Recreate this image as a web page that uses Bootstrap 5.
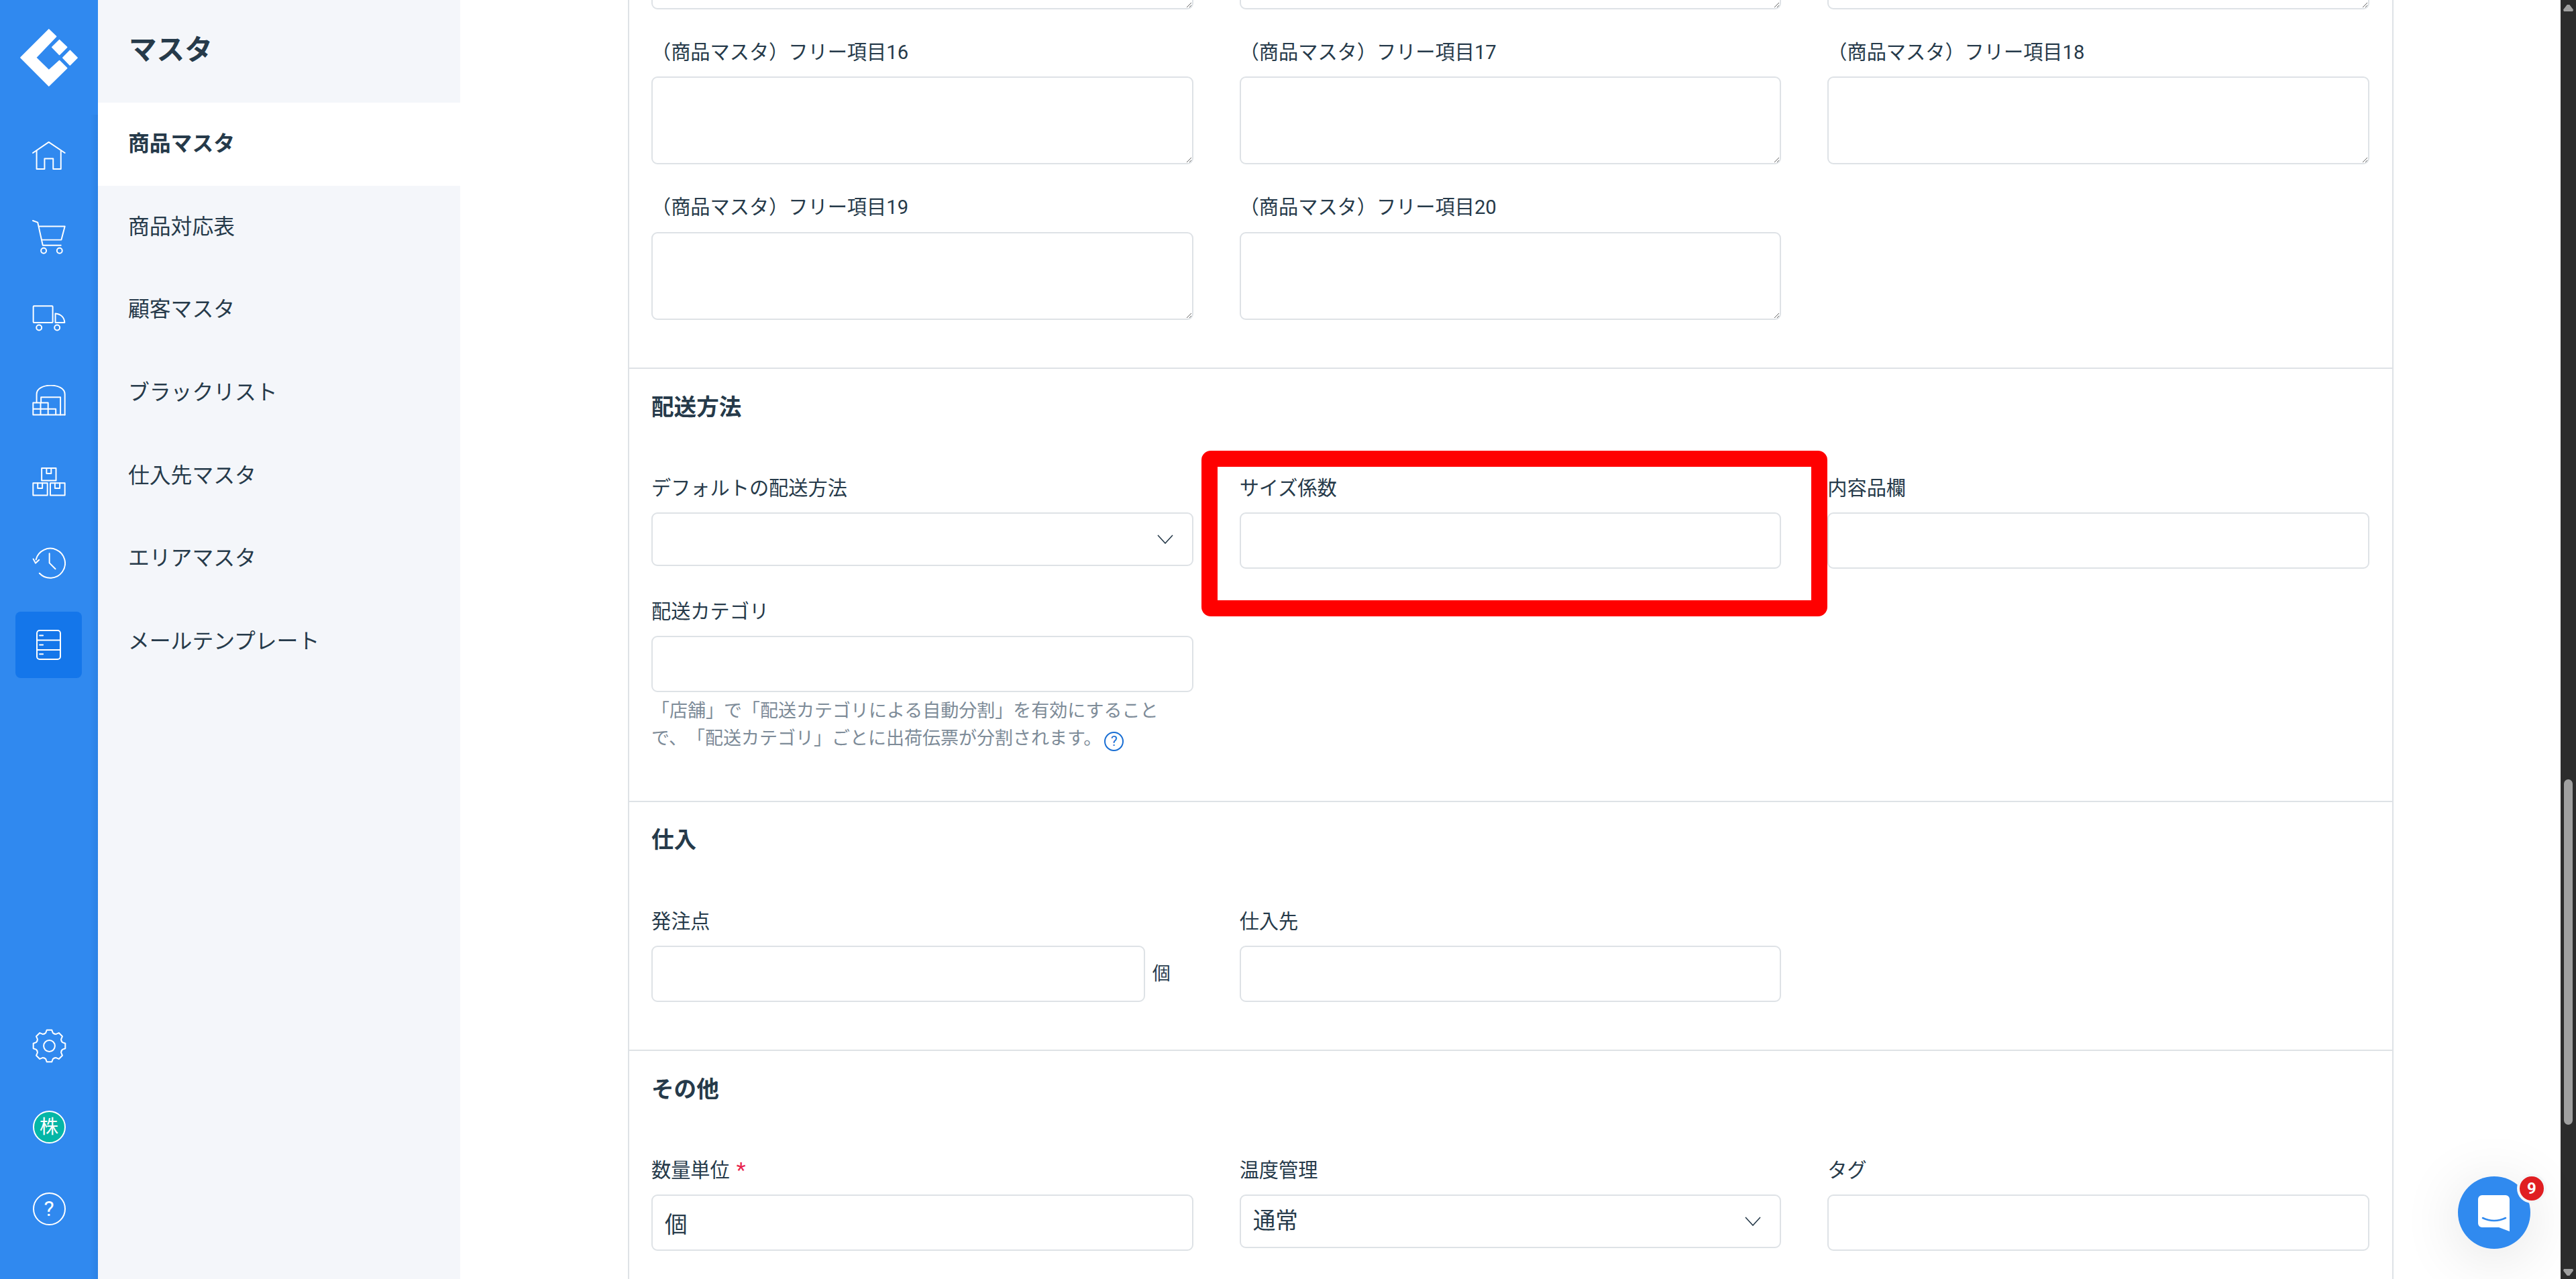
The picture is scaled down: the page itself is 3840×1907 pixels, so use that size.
<!DOCTYPE html>
<html lang="ja">

<head>
    <meta charset="UTF-8">
    <meta name="viewport" content="width=device-width, initial-scale=1.0">
    <title>商品マスタ</title>
    <link href="https://cdn.jsdelivr.net/npm/bootstrap@5.3.0/dist/css/bootstrap.min.css" rel="stylesheet">
    <style>
        html, body {
            height: 100%;
            overflow: hidden;
        }

        body {
            font-family: Roboto, "Noto Sans CJK JP", sans-serif;
            font-size: 29.2px;
            color: #263a4a;
            background: #fff;
            text-spacing-trim: space-all;
        }

        /* icon rail */
        .rail {
            width: 146px;
            background: linear-gradient(90deg, #3089ef 92%, #2c82e4 100%);
        }

        .rail-logo {
            height: 171px;
            background: #3089ef;
        }

        .rail-logo svg {
            width: 86px;
            height: 86px;
        }

        .rail-item {
            height: 121.6px;
        }

        .rail-item svg {
            fill: none;
            stroke: #fff;
            stroke-width: 6;
            stroke-linejoin: round;
            stroke-linecap: round;
        }

        .rail-item.active {
            height: 99px;
            width: 99px;
            margin: 11px 0 11.6px 23px;
            background: #1476ea;
            border-radius: 8px;
        }

        .rail-foot {
            padding-bottom: 44px;
        }

        .rail-round {
            width: 49px;
            height: 49px;
            border: 2px solid #fff;
            color: #fff;
            font-size: 32px;
            line-height: 1;
        }

        .rail-round.company {
            background: #05b6a6;
            font-size: 28px;
        }

        /* master menu */
        .panel {
            width: 540px;
            background: #f4f6fa;
        }

        .panel-title {
            height: 153px;
            padding: 0 0 4px 46px;
            margin: 0;
            font-size: 41.6px;
            font-weight: 700;
        }

        .panel .nav-link {
            height: 123.7px;
            padding: 0 0 0 45px;
            font-size: 31.8px;
            color: #263a4a;
        }

        .panel .nav-link.active {
            background: #fff;
            font-weight: 700;
        }

        /* form area */
        .main {
            min-width: 0;
            padding: 0 249px 0 250px;
        }

        .form-card {
            margin-top: -176px;
            border: 2px solid #dee2e6;
            border-width: 0 2px;
        }

        .form-section {
            padding: 32.5px 34px 30.5px 33px;
            border-top: 2px solid #dee2e6;
        }

        .form-section:first-child {
            padding-top: 0;
            border-top: 0;
        }

        .form-section h2 {
            margin: 0 0 72px;
            font-size: 33.6px;
            line-height: 1.5;
            font-weight: 700;
        }

        .form-section .row {
            --bs-gutter-x: 69px;
        }

        .field {
            margin-bottom: 41px;
        }

        .field label {
            display: block;
            padding-top: 2px;
            margin-bottom: 13.4px;
            line-height: 1.5;
        }

        .required {
            margin-left: 10px;
            font-size: 32px;
            line-height: 1;
            color: #e8254f;
        }

        .form-control,
        .form-select {
            height: 84px;
            padding: 0 18px;
            font-size: 33.6px;
            color: #263a4a;
            border: 2px solid #dee2e6;
            border-radius: 9px;
        }

        .form-select {
            height: 80px;
            background-image: url("data:image/svg+xml,%3Csvg xmlns='http://www.w3.org/2000/svg' viewBox='0 0 24 14'%3E%3Cpath d='M1 1l11 12L23 1' fill='none' stroke='%23263a4a' stroke-width='1.6'/%3E%3C/svg%3E");
            background-position: right 28px center;
            background-size: 24px 14px;
        }

        textarea.form-control {
            height: 131px;
            min-height: 0;
        }

        .unit {
            margin: 0 34px 0 11px;
            font-size: 27px;
        }

        .hint {
            margin-top: 8px;
            font-size: 27px;
            line-height: 41px;
            color: #7d8b98;
        }

        .hint-icon {
            width: 29px;
            height: 29px;
            margin-left: 4px;
            border: 2px solid #1a6fd4;
            color: #1a6fd4;
            font-size: 21px;
            line-height: 1;
            vertical-align: -2px;
        }

        .highlight {
            top: -33px;
            left: -57px;
            width: 933px;
            height: 247px;
            border: 24px solid #f00;
            border-radius: 14px;
            pointer-events: none;
        }

        /* browser scrollbar */
        .scrollbar {
            width: 23px;
            background: #2c2c2c;
        }

        .scrollbar-thumb {
            width: 13px;
            height: 515px;
            margin: 1162px auto 0;
            background: #a0a0a0;
            border-radius: 7px;
        }

        .scrollbar-arrow {
            right: 4px;
            width: 15px;
            height: 10px;
            background: #a0a0a0;
        }

        .scrollbar-arrow.up {
            top: 7px;
            clip-path: polygon(38% 0, 62% 0, 100% 75%, 94% 100%, 6% 100%, 0 75%);
        }

        .scrollbar-arrow.down {
            bottom: 5px;
            clip-path: polygon(6% 0, 94% 0, 100% 25%, 62% 100%, 38% 100%, 0 25%);
        }

        /* chat launcher */
        .chat {
            right: 68px;
            top: 1754px;
            width: 108px;
            height: 108px;
            background: #308aef;
            box-shadow: 0 12px 90px rgba(0, 0, 0, .12);
        }

        .chat svg {
            width: 48px;
            height: 54px;
            margin-top: 1px;
        }

        .chat-badge {
            top: -4px;
            right: -24px;
            width: 44px;
            height: 44px;
            border: 4px solid #f4f6f8;
            background: #e01e22;
            color: #fff;
            font-size: 24px;
            font-weight: 700;
            line-height: 1;
        }
    </style>
</head>

<body>
    <div class="d-flex h-100">
        <!-- Icon rail -->
        <aside class="rail d-flex flex-column flex-shrink-0">
            <div class="rail-logo d-flex align-items-center justify-content-center">
                <svg viewBox="87 128 257 257" fill="#fff" stroke="#fff" stroke-width="5" stroke-linejoin="round">
                    <path d="M215 131L247 162 157 256 215 313 262 270 295 303 215 382 90 256Z" />
                    <path d="M262 178L295 210 262 243 230 210Z" />
                    <path d="M309 225L341 257 309 289 278 257Z" />
                </svg>
            </div>
            <div class="rail-item d-flex align-items-center justify-content-center">
                <svg width="50" height="44" viewBox="140 628 152 132">
                    <path d="M143 682L215 633 288 682" />
                    <path d="M160 672V755H196V708H235V755H270V672" />
                </svg>
            </div>
            <div class="rail-item d-flex align-items-center justify-content-center">
                <svg width="50" height="51" viewBox="140 984 152 153">
                    <path d="M143 986L165 994 188 1098H270" />
                    <path d="M170 1012H288L272 1073H184" />
                    <circle cx="192" cy="1122" r="12" />
                    <circle cx="264" cy="1122" r="12" />
                </svg>
            </div>
            <div class="rail-item d-flex align-items-center justify-content-center">
                <svg width="50" height="39" viewBox="140 1365 152 117">
                    <rect x="145" y="1368" width="88" height="75" rx="3" />
                    <path d="M245 1402C270 1404 286 1420 287 1443H245Z" />
                    <circle cx="171" cy="1466" r="12" />
                    <circle cx="253" cy="1466" r="12" />
                </svg>
            </div>
            <div class="rail-item d-flex align-items-center justify-content-center">
                <svg width="50" height="46" viewBox="140 220 152 139">
                    <path d="M160 298V262C160 208 288 208 288 262V355" />
                    <path d="M180 298V275H268V355" />
                    <path d="M144 300H212V355M144 300V355H288M144 328H247V355M178 300V355" />
                </svg>
            </div>
            <div class="rail-item d-flex align-items-center justify-content-center">
                <svg width="50" height="43" viewBox="140 588 152 130">
                    <rect x="183" y="591" width="65" height="56" />
                    <path d="M205 591V615H226V591" />
                    <rect x="144" y="658" width="65" height="56" />
                    <path d="M165 658V682H186V658" />
                    <rect x="222" y="658" width="66" height="56" />
                    <path d="M243 658V682H265V658" />
                </svg>
            </div>
            <div class="rail-item d-flex align-items-center justify-content-center">
                <svg width="50" height="47" viewBox="140 948 152 141">
                    <path d="M157 1003A67 67 0 1 1 173 1065" />
                    <path d="M145 1000L155 1019 171 1004" />
                    <path d="M218 975V1018L245 1045" />
                </svg>
            </div>
            <div class="rail-item active d-flex align-items-center justify-content-center">
                <svg width="37" height="45" viewBox="161 1314 110 134">
                    <rect x="164" y="1317" width="104" height="128" rx="12" />
                    <path d="M164 1360H268M164 1403H268" />
                    <path d="M176 1339H191M176 1381H191M176 1422H191" />
                </svg>
            </div>

            <div class="rail-foot mt-auto">
                <div class="rail-item d-flex align-items-center justify-content-center">
                    <svg width="51" height="51" viewBox="-76 -76 152 152">
                        <defs>
                            <polyline id="gear-tooth" points="-22,-54 -16,-58 -11,-71 11,-71 16,-58 22,-54" />
                        </defs>
                        <use href="#gear-tooth" />
                        <use href="#gear-tooth" transform="rotate(45)" />
                        <use href="#gear-tooth" transform="rotate(90)" />
                        <use href="#gear-tooth" transform="rotate(135)" />
                        <use href="#gear-tooth" transform="rotate(180)" />
                        <use href="#gear-tooth" transform="rotate(225)" />
                        <use href="#gear-tooth" transform="rotate(270)" />
                        <use href="#gear-tooth" transform="rotate(315)" />
                        <circle r="25" />
                    </svg>
                </div>
                <div class="rail-item d-flex align-items-center justify-content-center">
                    <span class="rail-round company rounded-circle d-flex align-items-center justify-content-center">株</span>
                </div>
                <div class="rail-item d-flex align-items-center justify-content-center">
                    <span class="rail-round rounded-circle d-flex align-items-center justify-content-center">?</span>
                </div>
            </div>
        </aside>

        <!-- Master menu -->
        <nav class="panel flex-shrink-0">
            <h1 class="panel-title d-flex align-items-center">マスタ</h1>
            <div class="nav flex-column">
                <a class="nav-link active d-flex align-items-center" href="#">商品マスタ</a>
                <a class="nav-link d-flex align-items-center" href="#">商品対応表</a>
                <a class="nav-link d-flex align-items-center" href="#">顧客マスタ</a>
                <a class="nav-link d-flex align-items-center" href="#">ブラックリスト</a>
                <a class="nav-link d-flex align-items-center" href="#">仕入先マスタ</a>
                <a class="nav-link d-flex align-items-center" href="#">エリアマスタ</a>
                <a class="nav-link d-flex align-items-center" href="#">メールテンプレート</a>
            </div>
        </nav>

        <!-- Form -->
        <main class="main flex-grow-1 overflow-hidden">
            <div class="form-card">
                <section class="form-section">
                    <div class="row">
                        <div class="col-4 field"><label>（商品マスタ）フリー項目13</label><textarea class="form-control"></textarea></div>
                        <div class="col-4 field"><label>（商品マスタ）フリー項目14</label><textarea class="form-control"></textarea></div>
                        <div class="col-4 field"><label>（商品マスタ）フリー項目15</label><textarea class="form-control"></textarea></div>
                        <div class="col-4 field"><label>（商品マスタ）フリー項目16</label><textarea class="form-control"></textarea></div>
                        <div class="col-4 field"><label>（商品マスタ）フリー項目17</label><textarea class="form-control"></textarea></div>
                        <div class="col-4 field"><label>（商品マスタ）フリー項目18</label><textarea class="form-control"></textarea></div>
                        <div class="col-4 field"><label>（商品マスタ）フリー項目19</label><textarea class="form-control"></textarea></div>
                        <div class="col-4 field"><label>（商品マスタ）フリー項目20</label><textarea class="form-control"></textarea></div>
                    </div>
                </section>

                <section class="form-section">
                    <h2>配送方法</h2>
                    <div class="row">
                        <div class="col-4 field">
                            <label>デフォルトの配送方法</label>
                            <select class="form-select"><option></option></select>
                        </div>
                        <div class="col-4 field">
                            <div class="position-relative">
                                <label>サイズ係数</label>
                                <input class="form-control" type="text">
                                <div class="highlight position-absolute"></div>
                            </div>
                        </div>
                        <div class="col-4 field">
                            <label>内容品欄</label>
                            <input class="form-control" type="text">
                        </div>
                        <div class="col-4 field">
                            <label>配送カテゴリ</label>
                            <input class="form-control" type="text">
                            <div class="hint">「店舗」で「配送カテゴリによる自動分割」を有効にすること<br>で、「配送カテゴリ」ごとに出荷伝票が分割されます。<span class="hint-icon rounded-circle d-inline-flex align-items-center justify-content-center">?</span></div>
                        </div>
                    </div>
                </section>

                <section class="form-section">
                    <h2>仕入</h2>
                    <div class="row">
                        <div class="col-4 field">
                            <label>発注点</label>
                            <div class="d-flex align-items-center">
                                <input class="form-control" type="text">
                                <span class="unit flex-shrink-0">個</span>
                            </div>
                        </div>
                        <div class="col-4 field">
                            <label>仕入先</label>
                            <input class="form-control" type="text">
                        </div>
                    </div>
                </section>

                <section class="form-section">
                    <h2>その他</h2>
                    <div class="row">
                        <div class="col-4 field">
                            <label>数量単位<span class="required">*</span></label>
                            <input class="form-control" type="text" value="個">
                        </div>
                        <div class="col-4 field">
                            <label>温度管理</label>
                            <select class="form-select"><option>通常</option></select>
                        </div>
                        <div class="col-4 field">
                            <label>タグ</label>
                            <input class="form-control" type="text">
                        </div>
                    </div>
                </section>
            </div>
        </main>

        <!-- Scrollbar -->
        <div class="scrollbar position-relative flex-shrink-0">
            <div class="scrollbar-arrow up position-absolute"></div>
            <div class="scrollbar-thumb"></div>
            <div class="scrollbar-arrow down position-absolute"></div>
        </div>
    </div>

    <!-- Chat launcher -->
    <div class="chat position-fixed rounded-circle d-flex align-items-center justify-content-center">
        <svg viewBox="0 0 48 54">
            <path fill="#fff" d="M6 0H41A6 6 0 0 1 47 6V54L31 48H6A6 6 0 0 1 0 42V6A6 6 0 0 1 6 0Z" />
            <path fill="none" stroke="#308aef" stroke-width="2.6" stroke-linecap="round" d="M7 34Q24 42 41 34" />
        </svg>
        <span class="chat-badge position-absolute rounded-circle d-flex align-items-center justify-content-center">9</span>
    </div>

    <script src="https://cdn.jsdelivr.net/npm/bootstrap@5.3.0/dist/js/bootstrap.bundle.min.js"></script>
</body>

</html>
